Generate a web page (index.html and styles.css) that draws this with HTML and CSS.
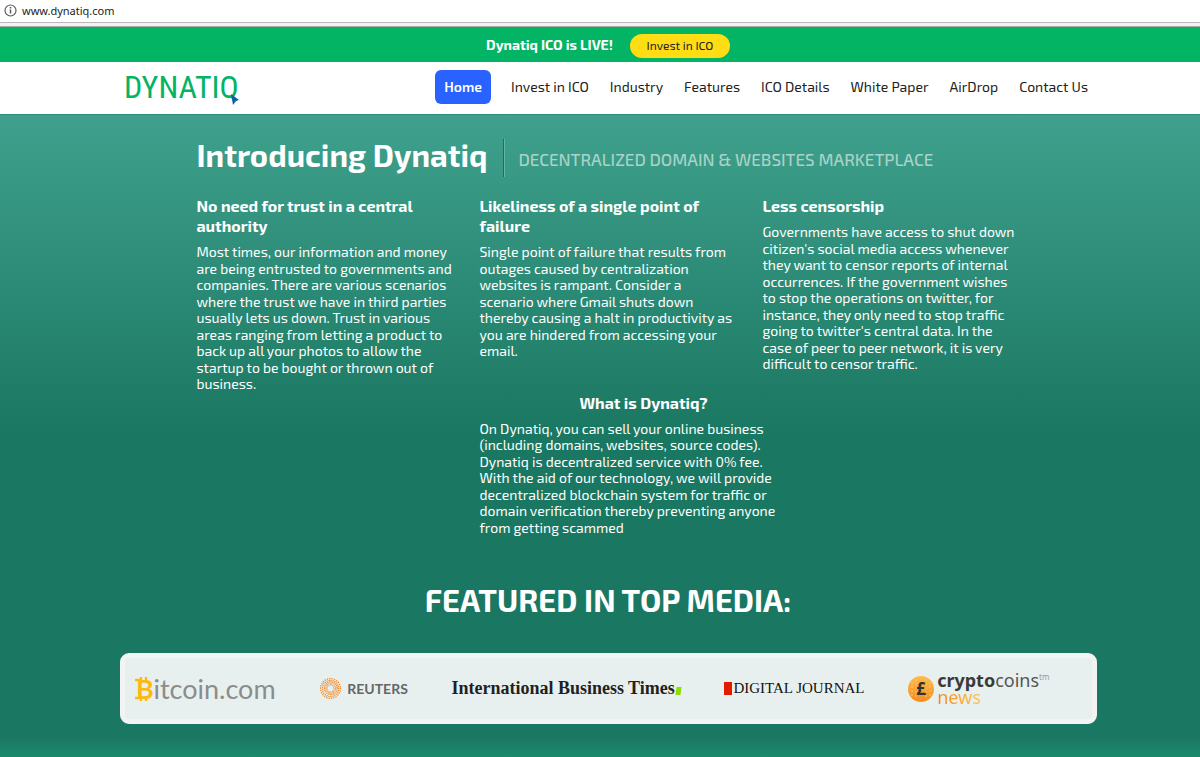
FILE: index.html
```html
<!DOCTYPE html>
<html lang="en">
<head>
  <meta charset="UTF-8">
  <meta name="viewport" content="width=device-width, initial-scale=1">
  <title>Dynatiq</title>
  <link rel="stylesheet" href="styles.css">
</head>
<body>

  <div class="address-bar">
    <svg class="info-icon" viewBox="0 0 13 13" aria-hidden="true">
      <circle cx="6.5" cy="6.5" r="5.5" fill="none" stroke="#5a5a5a" stroke-width="1.2"/>
      <path d="M6.5 5.6v4M6.5 3v1.5" stroke="#5a5a5a" stroke-width="1.5"/>
    </svg>
    <span>www.dynatiq.com</span>
  </div>

  <div class="ico-bar">
    <strong>Dynatiq ICO is LIVE!</strong>
    <button class="ico-btn" type="button">Invest in ICO</button>
  </div>

  <header class="header">
    <div class="header-inner">
      <a class="logo" href="#">DYNATIQ
        <svg class="logo-cursor" viewBox="0 0 8 11" aria-hidden="true"><path d="M0 0l8 6-3 1-3 4z" fill="#0b63a5"/></svg>
      </a>
      <nav class="menu">
        <a class="active" href="#">Home</a>
        <a href="#">Invest in ICO</a>
        <a href="#">Industry</a>
        <a href="#">Features</a>
        <a href="#">ICO Details</a>
        <a href="#">White Paper</a>
        <a href="#">AirDrop</a>
        <a href="#">Contact Us</a>
      </nav>
    </div>
  </header>

  <main class="hero">
    <section class="intro">
      <div class="intro-head">
        <h1>Introducing Dynatiq</h1>
        <p class="tagline">DECENTRALIZED DOMAIN &amp; WEBSITES MARKETPLACE</p>
      </div>
      <div class="columns">
        <article>
          <h3>No need for trust in a central<br>authority</h3>
          <p>Most times, our information and money<br>
            are being entrusted to governments and<br>
            companies. There are various scenarios<br>
            where the trust we have in third parties<br>
            usually lets us down. Trust in various<br>
            areas ranging from letting a product to<br>
            back up all your photos to allow the<br>
            startup to be bought or thrown out of<br>
            business.</p>
        </article>
        <article>
          <h3>Likeliness of a single point of<br>failure</h3>
          <p>Single point of failure that results from<br>
            outages caused by centralization<br>
            websites is rampant. Consider a<br>
            scenario where Gmail shuts down<br>
            thereby causing a halt in productivity as<br>
            you are hindered from accessing your<br>
            email.</p>
        </article>
        <article>
          <h3>Less censorship</h3>
          <p>Governments have access to shut down<br>
            citizen's social media access whenever<br>
            they want to censor reports of internal<br>
            occurrences. If the government wishes<br>
            to stop the operations on twitter, for<br>
            instance, they only need to stop traffic<br>
            going to twitter's central data. In the<br>
            case of peer to peer network, it is very<br>
            difficult to censor traffic.</p>
        </article>
        <article class="what">
          <h3>What is Dynatiq?</h3>
          <p>On Dynatiq, you can sell your online business<br>
            (including domains, websites, source codes).<br>
            Dynatiq is decentralized service with 0% fee.<br>
            With the aid of our technology, we will provide<br>
            decentralized blockchain system for traffic or<br>
            domain verification thereby preventing anyone<br>
            from getting scammed</p>
        </article>
      </div>
    </section>

    <section class="media">
      <h2>FEATURED IN TOP MEDIA:</h2>
      <div class="media-box">
        <a class="bitcoin" href="#">
          <svg class="bitcoin-b" viewBox="0 0 20 32" aria-hidden="true">
            <path d="M7 4v5M12 4v5M7 23v5M12 23v5M1 7h6M1 25h6" stroke="#fdb913" stroke-width="2.4"/>
            <text x="2" y="26" class="bitcoin-letter">B</text>
          </svg>itcoin.com
        </a>
        <a class="reuters" href="#">
          <svg class="reuters-ring" viewBox="0 0 24 24" fill="none" stroke="#f68d2e" stroke-linecap="round" aria-hidden="true">
            <circle cx="12" cy="12" r="10.3" stroke-width="1.7" stroke-dasharray="0 2.5"/>
            <circle cx="12" cy="12" r="8.4" stroke-width="1.6" stroke-dasharray="0 2.1"/>
            <circle cx="12.3" cy="11.7" r="6.6" stroke-width="1.5" stroke-dasharray="0 1.8"/>
            <circle cx="12.2" cy="11.8" r="5" stroke-width="1.2" stroke-dasharray="0 1.5"/>
            <circle cx="12" cy="12" r="3.7" stroke-width="1" stroke-dasharray="0 1.2"/>
          </svg>
          REUTERS
        </a>
        <a class="ibt" href="#">International Business Times<i class="ibt-dot"></i></a>
        <a class="journal" href="#"><i class="journal-mark"></i>DIGITAL JOURNAL</a>
        <a class="ccn" href="#">
          <svg class="ccn-coin" viewBox="0 0 26 26" aria-hidden="true">
            <defs>
              <linearGradient id="coin" x1="0" y1="0" x2="0" y2="1">
                <stop offset="0" stop-color="#fdbd4a"/>
                <stop offset="1" stop-color="#f68b1f"/>
              </linearGradient>
            </defs>
            <circle cx="13" cy="13" r="13" fill="url(#coin)"/>
            <path d="M4 6v14M8 3v20M18 3v20M22 6v14" stroke="#fcc670" stroke-dasharray="2 2"/>
            <text x="13" y="19" text-anchor="middle" class="coin-sign">£</text>
          </svg>
          <span class="ccn-name">
            <span><b>crypto</b>coins<sup>tm</sup></span>
            <span class="ccn-news">news</span>
          </span>
        </a>
      </div>
    </section>
  </main>

</body>
</html>
```

FILE: styles.css
```css
* { box-sizing: border-box; }
body {
  margin: 0;
  min-height: 100vh;
  display: flex;
  flex-direction: column;
  font-family: "Exo 2", Roboto, "Noto Sans", sans-serif;
  font-size: 14px;
  color: #fff;
}
h1, h2, h3, p { margin: 0; }
a { color: inherit; text-decoration: none; }

/* address bar */
.address-bar {
  display: flex;
  align-items: center;
  gap: 5px;
  height: 27px;
  padding: 0 4px 6px;
  background: linear-gradient(#fff 22px, #b8b8b8 22px, #b8b8b8 23px, #f2f2f2 23px, #f2f2f2 26px, #aaa 26px);
  font-family: "Noto Sans", sans-serif;
  font-size: 11px;
  color: #222;
}
.info-icon { width: 13px; height: 13px; }

/* ICO bar */
.ico-bar {
  display: flex;
  justify-content: center;
  align-items: center;
  gap: 17px;
  height: 35px;
  padding-left: 16px;
  background: #02b463;
}
.ico-btn {
  width: 100px;
  height: 24px;
  margin-top: 2px;
  padding: 0 0 2px;
  border: 0;
  border-radius: 12px;
  background: #ffdd15;
  color: #222;
  font-family: inherit;
  font-size: 12px;
  cursor: pointer;
}

/* header */
.header {
  padding-left: 16px;
  background: #fff;
  color: #222;
}
.header-inner {
  display: flex;
  justify-content: space-between;
  align-items: center;
  max-width: 978px;
  height: 52px;
  margin: 0 auto;
  padding: 0 0 2px 5px;
}
.logo {
  position: relative;
  font-family: "Liberation Sans Narrow", "Roboto Condensed", Roboto, sans-serif;
  font-size: 32px;
  line-height: 36px;
  color: #02b463;
}
.logo-cursor {
  position: absolute;
  right: 0;
  bottom: 0;
  width: 8px;
  height: 11px;
}
.menu {
  display: flex;
  align-items: center;
  gap: 3px;
}
.menu a { padding: 8px 9px; line-height: 18px; }
.menu .active {
  margin-right: 8px;
  border-radius: 6px;
  background: #2962ff;
  color: #fff;
  font-weight: 600;
}

/* hero */
.hero {
  flex: 1;
  padding: 23px 0 33px 16px;
  border-top: 1px solid #2f8f7b;
  background: linear-gradient(#3fa18d, #1a7761 320px, #1a7761 calc(100% - 20px), #1c896d);
}
.intro {
  max-width: 823px;
  margin: 0 auto;
}
.intro-head {
  display: flex;
  align-items: center;
  gap: 16px;
  height: 40px;
  margin-bottom: 18px;
}
.intro h1 {
  padding-bottom: 6px;
  font-size: 31px;
  line-height: 36px;
}
.tagline {
  padding: 2px 0 0 14px;
  border-left: 1px solid #206f5d;
  box-shadow: inset 1px 0 #67b4a4;
  font-size: 17px;
  font-weight: 500;
  line-height: 36px;
  color: #a9d2c8;
}
.columns {
  display: grid;
  grid-template-columns: repeat(3, minmax(0, 1fr));
  column-gap: 26px;
}
.columns article { white-space: nowrap; }
.columns h3 {
  margin-bottom: 8px;
  font-size: 16px;
  line-height: 20px;
}
.columns p { line-height: 1.18; }
.columns .what { grid-column: 2 / 4; width: 328px; }
.what h3 { text-align: center; }

/* media */
.media {
  max-width: 977px;
  margin: 44px auto 0;
}
.media h2 {
  margin-bottom: 33px;
  font-size: 31px;
  line-height: 40px;
  text-align: center;
}
.media-box {
  display: flex;
  justify-content: space-between;
  align-items: center;
  height: 71px;
  padding: 0 42px 0 9px;
  border: 5px solid #f2f3f3;
  border-radius: 9px;
  background: #e8f0ef;
}
.media-box a {
  display: flex;
  align-items: center;
  white-space: nowrap;
}
.bitcoin {
  font-family: Lato, sans-serif;
  font-size: 27px;
  color: #8c8c8c;
}
.bitcoin-b { width: 20px; height: 32px; }
.bitcoin-letter {
  font-family: Lato, sans-serif;
  font-size: 27px;
  font-weight: bold;
  fill: #fdb913;
}
.reuters {
  gap: 5px;
  font-family: Lato, sans-serif;
  font-size: 14px;
  font-weight: bold;
  color: #666;
}
.reuters-ring { width: 23px; height: 23px; }
.ibt {
  gap: 1px;
  font-family: "Liberation Serif", serif;
  font-size: 18px;
  font-weight: bold;
  color: #231f20;
}
.ibt-dot {
  align-self: flex-end;
  width: 5px;
  height: 8px;
  margin-bottom: 4px;
  background: #8be000;
  transform: skewX(-8deg);
}
.journal {
  gap: 1px;
  font-family: "Liberation Serif", serif;
  font-size: 15px;
  color: #111;
}
.journal-mark { width: 8px; height: 13px; background: #e11b00; }
.ccn {
  gap: 3px;
  font-family: "Noto Sans", sans-serif;
  font-size: 18px;
  line-height: 17px;
  color: #555;
}
.ccn b { color: #3a3a3a; }
.ccn-coin { width: 26px; height: 26px; }
.coin-sign { font: bold 17px "Noto Sans", sans-serif; fill: #333; }
.ccn-name { display: flex; flex-direction: column; }
.ccn sup { font-size: 8px; line-height: 0; color: #999; }
.ccn-news {
  background: linear-gradient(90deg, #f58220, #fdc649 44px);
  background-clip: text;
  color: transparent;
}
```
